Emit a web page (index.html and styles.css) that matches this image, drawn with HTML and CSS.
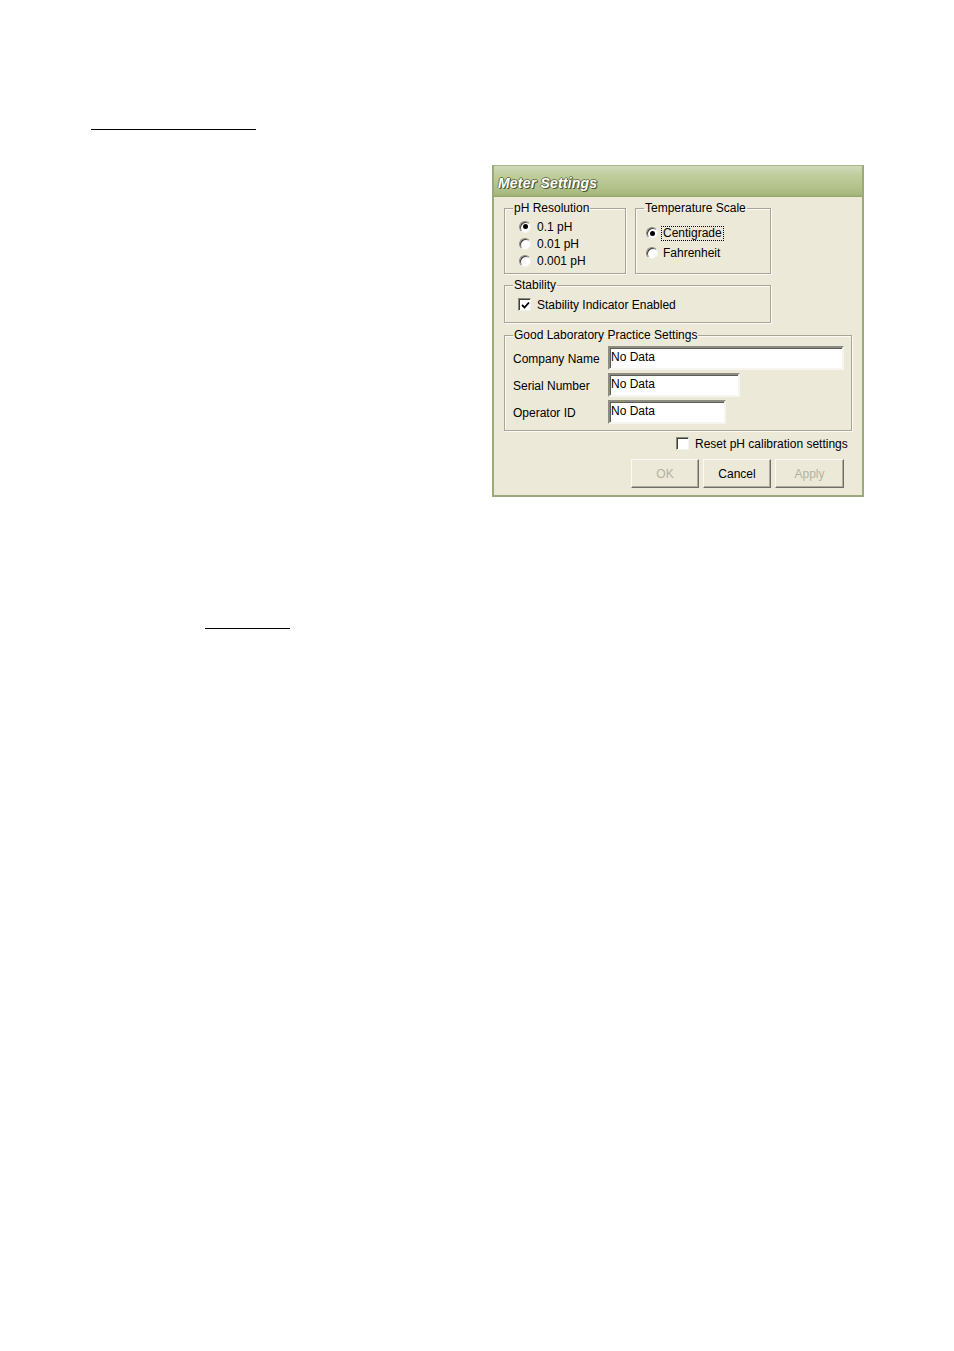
FILE: index.html
```html
<!DOCTYPE html>
<html>
<head>
<meta charset="utf-8">
<title>Meter Settings</title>
<link rel="stylesheet" href="styles.css">
</head>
<body>
<div class="page">
  <div class="rule rule-top"></div>

  <div class="dialog">
    <div class="titlebar"><span class="title">Meter Settings</span></div>
    <div class="dlg-body">
      <div class="row-top">
        <fieldset class="group group-ph">
          <legend>pH Resolution</legend>
          <div class="group-inner inner-ph">
            <div class="opt"><span class="radio checked"></span><span class="opt-text">0.1 pH</span></div>
            <div class="opt"><span class="radio"></span><span class="opt-text">0.01 pH</span></div>
            <div class="opt"><span class="radio"></span><span class="opt-text">0.001 pH</span></div>
          </div>
        </fieldset>
        <fieldset class="group group-temp">
          <legend>Temperature Scale</legend>
          <div class="group-inner inner-temp">
            <div class="opt opt-tall"><span class="radio checked"></span><span class="opt-focus focused">Centigrade</span></div>
            <div class="opt opt-tall"><span class="radio"></span><span class="opt-focus">Fahrenheit</span></div>
          </div>
        </fieldset>
      </div>

      <fieldset class="group group-stab">
        <legend>Stability</legend>
        <div class="group-inner inner-stab">
          <div class="opt opt-check">
            <span class="check">
              <svg class="tick" viewBox="0 0 9 9" width="9" height="9"><polyline points="1,4 3.5,6.5 8,1.5" fill="none" stroke="#000" stroke-width="1.8"/></svg>
            </span>
            <span class="opt-text">Stability Indicator Enabled</span>
          </div>
        </div>
      </fieldset>

      <fieldset class="group group-glp">
        <legend>Good Laboratory Practice Settings</legend>
        <div class="group-inner inner-glp">
          <div class="glp-grid">
            <span class="glp-label">Company Name</span><span class="field w-company">No Data</span>
            <span class="glp-label">Serial Number</span><span class="field w-serial">No Data</span>
            <span class="glp-label">Operator ID</span><span class="field w-operator">No Data</span>
          </div>
        </div>
      </fieldset>

      <div class="reset-row">
        <span class="check"></span>
        <span class="opt-text">Reset pH calibration settings</span>
      </div>

      <div class="buttons">
        <button class="btn" disabled>OK</button>
        <button class="btn">Cancel</button>
        <button class="btn btn-wide" disabled>Apply</button>
      </div>
    </div>
  </div>

  <div class="rule rule-bottom"></div>
</div>
</body>
</html>
```

FILE: styles.css
```css
html, body {
  margin: 0;
  padding: 0;
  background: #ffffff;
}

body {
  font-family: "Liberation Sans", Arial, sans-serif;
  font-size: 12px;
  color: #000;
}

.page {
  width: 954px;
  min-height: 1351px;
  padding-top: 129px;
  box-sizing: border-box;
}

.rule {
  border-top: 1px solid #000;
  height: 0;
}

.rule-top {
  margin-left: 91px;
  width: 165px;
}

.rule-bottom {
  margin-left: 205px;
  width: 85px;
  margin-top: 131px;
}

/* Dialog window */
.dialog {
  margin-top: 35px;
  margin-left: 492px;
  width: 372px;
  height: 332px;
  box-sizing: border-box;
  border: 2px solid #9aaa7a;
  border-top: 1px solid #a7b588;
  background: #ece9d8;
  display: flex;
  flex-direction: column;
}

.titlebar {
  height: 31px;
  flex: none;
  background: linear-gradient(#d0daba 0%, #bfcd9c 30%, #b3c28b 70%, #a6b67c 92%, #93a36a 100%);
  display: flex;
  align-items: center;
  padding-left: 4px;
}

.title {
  font-family: "Liberation Sans", Arial, sans-serif;
  font-weight: bold;
  font-style: italic;
  font-size: 14px;
  color: #ffffff;
  text-shadow: 1px 1px 0 #4a5733, -1px 0 0 #6c7a4c, 0 -1px 0 #6c7a4c, 1px 0 0 #56643c;
  letter-spacing: 0.2px;
  position: relative;
  top: 1px;
}

.dlg-body {
  flex: 1;
  padding: 4px 0 0 10px;
  display: flex;
  flex-direction: column;
  align-items: flex-start;
}

.row-top {
  display: flex;
  gap: 9px;
}

/* Group boxes */
.group {
  margin: 0;
  padding: 0;
  min-width: 0;
  box-sizing: border-box;
  border: 1px solid #a6a598;
  box-shadow: inset 1px 1px 0 #fbfaf4, 1px 1px 0 #fbfaf4;
}

.group legend {
  padding: 0 1px;
  margin-left: 8px;
  font-size: 12px;
  line-height: 14px;
}

.group-ph {
  width: 122px;
  height: 73px;
}

.group-temp {
  width: 136px;
  height: 73px;
}

.group-stab {
  margin-top: 4px;
  width: 267px;
  height: 45px;
}

.group-glp {
  margin-top: 5px;
  width: 348px;
  height: 103px;
}

.inner-ph { padding: 3px 0 0 14px; }
.inner-temp { padding: 8px 0 0 10px; }
.inner-stab { padding: 4px 0 0 13px; }
.inner-glp { padding: 4px 0 0 8px; }

/* Options */
.opt {
  display: flex;
  align-items: center;
  height: 17px;
  line-height: 14px;
  white-space: nowrap;
}

.opt-tall {
  height: 20px;
}

.opt-text {
  margin-left: 6px;
}

.opt-focus {
  margin-left: 3px;
  padding: 0 1px;
  line-height: 13px;
  border: 1px dotted transparent;
}

.opt-focus.focused {
  border-color: #000;
}

.radio {
  width: 12px;
  height: 12px;
  box-sizing: border-box;
  border-radius: 50%;
  border: 1px solid;
  border-color: #8a897e #f2f1ea #f2f1ea #8a897e;
  background: #ffffff;
  box-shadow: inset 1px 1px 0 #3f3f3a;
  position: relative;
  flex: none;
}

.radio.checked::after {
  content: "";
  position: absolute;
  left: 2.5px;
  top: 2.5px;
  width: 5px;
  height: 5px;
  border-radius: 50%;
  background: #000;
}

.check {
  width: 13px;
  height: 13px;
  box-sizing: border-box;
  border: 1px solid;
  border-color: #8a897e #f4f3ee #f4f3ee #8a897e;
  box-shadow: inset 1px 1px 0 #3f3f3a;
  background: #ffffff;
  display: flex;
  align-items: center;
  justify-content: center;
  flex: none;
}

.tick {
  display: block;
  margin: 1px 0 0 1px;
}

/* GLP grid */
.glp-grid {
  display: grid;
  grid-template-columns: 95px auto;
  grid-auto-rows: 24px;
  row-gap: 3px;
  align-items: center;
}

.glp-label {
  white-space: nowrap;
  position: relative;
  top: 1px;
}

.field {
  height: 24px;
  box-sizing: border-box;
  background: #ffffff;
  border: 2px solid;
  border-color: #8d8c82 #f6f5ef #f6f5ef #8d8c82;
  box-shadow: inset 1px 1px 0 #5e5d55;
  padding: 2px 0 0 1px;
  line-height: 14px;
  white-space: nowrap;
}

.w-company { width: 236px; }
.w-serial { width: 132px; }
.w-operator { width: 118px; }

/* Reset row */
.reset-row {
  margin-top: 5px;
  padding-left: 172px;
  height: 15px;
  display: flex;
  align-items: center;
  white-space: nowrap;
}

/* Buttons */
.buttons {
  margin-top: 8px;
  margin-left: 127px;
  display: flex;
  gap: 4px;
}

.btn {
  width: 68px;
  height: 29px;
  box-sizing: border-box;
  margin: 0;
  padding: 0;
  font-family: "Liberation Sans", Arial, sans-serif;
  font-size: 12px;
  color: #000;
  background: #ece9d8;
  border: 1px solid;
  border-color: #fbfaf5 #6f6e66 #6f6e66 #fbfaf5;
  box-shadow: inset -1px -1px 0 #aeac9f;
  border-radius: 0;
}

.btn:disabled {
  color: #b3b1a3;
}

.btn-wide {
  width: 69px;
}
```
